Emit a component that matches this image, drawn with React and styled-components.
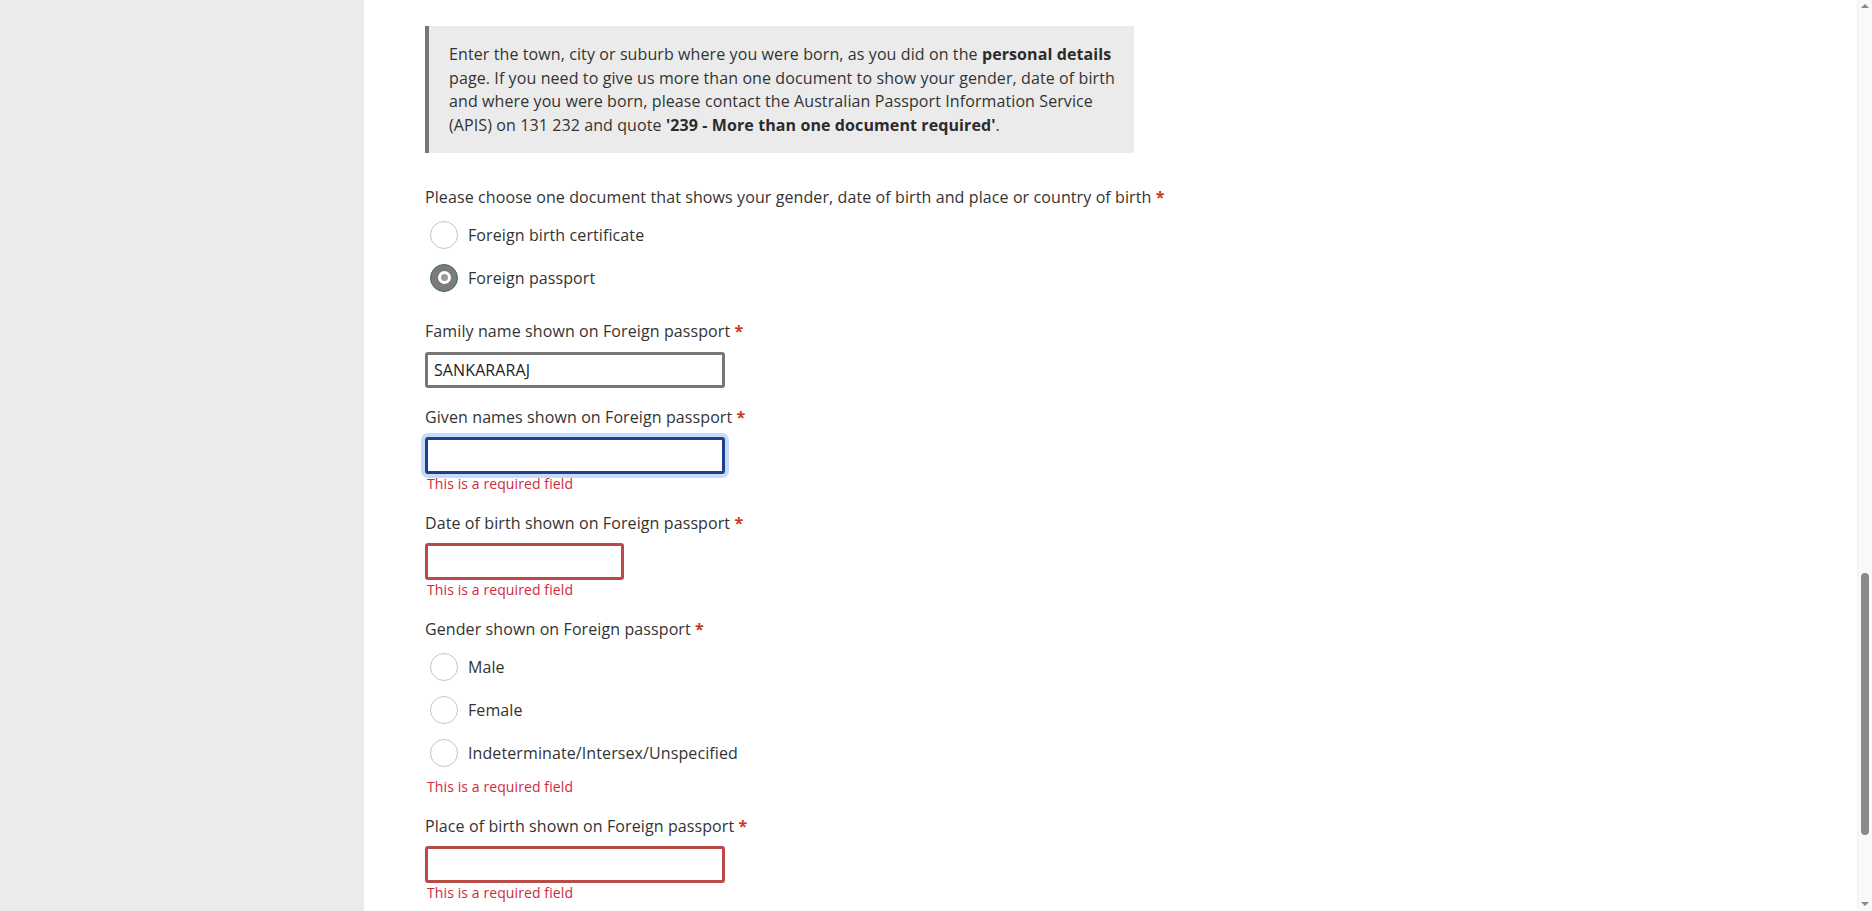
import React from "react"
import styled, { createGlobalStyle, css } from "styled-components"

const GlobalStyle = createGlobalStyle`
  html, body {
    margin: 0;
    padding: 0;
    height: 100%;
    overflow: hidden;
  }
  body {
    font-family: "Open Sans", "Liberation Sans", sans-serif;
    letter-spacing: 0.1px;
    color: #333;
    background: #fff;
  }
`

const App = () => (
  <>
    <GlobalStyle />
    <Page>
      <Sidebar />
      <Main>
        <InfoBox>
          Enter the town, city or suburb where you were born, as you did on the <b>personal details</b>
          <br />
          page. If you need to give us more than one document to show your gender, date of birth
          <br />
          and where you were born, please contact the Australian Passport Information Service
          <br />
          (APIS) on 131 232 and quote <b>'239 - More than one document required'</b>.
        </InfoBox>

        <Field>
          <Label $gap="12px">
            Please choose one document that shows your gender, date of birth and place or country of birth <Req>*</Req>
          </Label>
          <RadioList>
            <RadioRow>
              <Radio type="radio" name="doc" readOnly />
              <RadioText>Foreign birth certificate</RadioText>
            </RadioRow>
            <RadioRow>
              <Radio type="radio" name="doc" defaultChecked readOnly />
              <RadioText>Foreign passport</RadioText>
            </RadioRow>
          </RadioList>
        </Field>

        <Field>
          <Label>Family name shown on Foreign passport <Req>*</Req></Label>
          <TextInput defaultValue="SANKARARAJ" $width="300px" />
        </Field>

        <Field>
          <Label>Given names shown on Foreign passport <Req>*</Req></Label>
          <TextInput $width="300px" $state="focus" />
          <ErrorText>This is a required field</ErrorText>
        </Field>

        <Field>
          <Label>Date of birth shown on Foreign passport <Req>*</Req></Label>
          <TextInput $width="199px" $state="error" />
          <ErrorText>This is a required field</ErrorText>
        </Field>

        <Field>
          <Label $gap="12px">Gender shown on Foreign passport <Req>*</Req></Label>
          <RadioList $tight>
            <RadioRow>
              <Radio type="radio" name="gender" readOnly />
              <RadioText>Male</RadioText>
            </RadioRow>
            <RadioRow>
              <Radio type="radio" name="gender" readOnly />
              <RadioText>Female</RadioText>
            </RadioRow>
            <RadioRow>
              <Radio type="radio" name="gender" readOnly />
              <RadioText>Indeterminate/Intersex/Unspecified</RadioText>
            </RadioRow>
          </RadioList>
          <ErrorText>This is a required field</ErrorText>
        </Field>

        <Field>
          <Label>Place of birth shown on Foreign passport <Req>*</Req></Label>
          <TextInput $width="300px" $state="error" />
          <ErrorText>This is a required field</ErrorText>
        </Field>
      </Main>
      <Scrollbar>
        <ArrowUp />
        <Thumb />
        <ArrowDown />
      </Scrollbar>
    </Page>
  </>
)

export default App

const Page = styled.div`
  display: flex;
  width: 100%;
  height: 911px;
  overflow: hidden;
`

const Sidebar = styled.div`
  flex: 0 0 364px;
  background: #ebebeb;
`

const Main = styled.main`
  flex: 1;
  min-width: 0;
  padding: 26px 0 0 61px;
  background: #fff;
  overflow: hidden;
`

const InfoBox = styled.div`
  box-sizing: border-box;
  width: 709px;
  margin-bottom: 32px;
  padding: 17px 12px 15px 20px;
  background: #ebebeb;
  border-left: 4px solid #777;
  font-size: 16px;
  line-height: 23.7px;
  color: #333;
  white-space: nowrap;

  b {
    font-weight: 700;
    color: #2b2b2b;
  }
`

/* flow-root keeps the last child's margin inside the field */
const Field = styled.div`
  display: flow-root;
  margin-bottom: 16.5px;
`

const Label = styled.label`
  display: block;
  margin-bottom: ${props => props.$gap || "8.5px"};
  font-size: 16px;
  line-height: 24px;
  color: #333;
`

const Req = styled.span`
  color: #c63a1d;
  font-weight: 700;
`

const stateStyles = {
  focus: css`
    border-color: #1d3f8e;
    box-shadow: 0 0 0 4px #c6dcf6;
  `,
  error: css`
    border-color: #b94a48;
  `,
}

const TextInput = styled.input`
  display: block;
  box-sizing: border-box;
  width: ${props => props.$width};
  height: 36.5px;
  margin: 0;
  padding: 0 6px;
  border: 3px solid #777;
  border-radius: 3px;
  background: #fff;
  font-family: "Open Sans", "Liberation Sans", sans-serif;
  font-size: 16px;
  letter-spacing: 0.1px;
  color: #222;
  outline: none;
  ${props => stateStyles[props.$state]}
`

const ErrorText = styled.div`
  margin-left: 2px;
  font-size: 14px;
  line-height: 20.5px;
  color: #cf2a3d;
`

const RadioList = styled.div`
  display: flex;
  flex-direction: column;
  gap: 15px;
  margin-bottom: ${props => (props.$tight ? "10px" : "11px")};
`

const RadioRow = styled.div`
  display: flex;
  align-items: center;
  gap: 10px;
  padding-left: 5px;
  height: 28px;
`

const Radio = styled.input`
  appearance: none;
  position: relative;
  box-sizing: border-box;
  flex: 0 0 28px;
  width: 28px;
  height: 28px;
  margin: 0;
  border: 1px solid #c6c6c6;
  border-radius: 50%;
  background: #fff;

  &:checked {
    background: #7b7b7b;
    border-color: #3f6a76;
  }

  &:checked::after {
    content: "";
    position: absolute;
    top: 50%;
    left: 50%;
    box-sizing: border-box;
    width: 13px;
    height: 13px;
    margin: -6.5px 0 0 -6.5px;
    border: 3px solid #fff;
    border-radius: 50%;
    background: #9a9a9a;
  }
`

const RadioText = styled.span`
  font-size: 16px;
  line-height: 24px;
  color: #333;
`

const Scrollbar = styled.div`
  flex: 0 0 15px;
  display: flex;
  flex-direction: column;
  align-items: center;
  background: #f9f9f9;
  border-left: 1px solid #f1f1f1;
  box-sizing: border-box;
`

const ArrowUp = styled.div`
  margin-top: 4px;
  width: 0;
  height: 0;
  border-left: 4px solid transparent;
  border-right: 4px solid transparent;
  border-bottom: 4px solid #858a90;
`

const Thumb = styled.div`
  width: 8px;
  height: 262px;
  margin-top: 565px;
  border-radius: 4px;
  background: #8a8a8a;
`

const ArrowDown = styled.div`
  margin-top: auto;
  margin-bottom: 5px;
  width: 0;
  height: 0;
  border-left: 4px solid transparent;
  border-right: 4px solid transparent;
  border-top: 4px solid #858a90;
`
